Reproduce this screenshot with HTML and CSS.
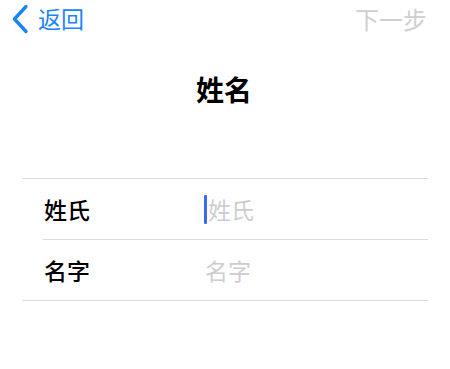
FILE: index.html
```html
<!DOCTYPE html>
<html lang="zh-CN">
<head>
<meta charset="utf-8">
<title>姓名</title>
<link rel="stylesheet" href="styles.css">
</head>
<body>
<div class="nav">
  <div class="back">
    <svg class="chev" width="17" height="30" viewBox="0 0 17 30" aria-hidden="true">
      <polyline points="14,2.5 2.5,15 14,27.5" fill="none" stroke="#1a84fb" stroke-width="3.4" stroke-linecap="round" stroke-linejoin="round"/>
    </svg>
    <span class="back-text">返回</span>
  </div>
  <div class="next">下一步</div>
</div>
<h1 class="title">姓名</h1>
<div class="form">
  <div class="row">
    <div class="label">姓氏</div>
    <div class="field"><span class="caret"></span><span class="ph">姓氏</span></div>
  </div>
  <div class="row">
    <div class="label">名字</div>
    <div class="field"><span class="ph">名字</span></div>
  </div>
</div>
</body>
</html>
```

FILE: styles.css
```css
html, body {
  margin: 0;
  padding: 0;
  background: #ffffff;
}
body {
  font-family: "Noto Sans CJK SC", "Noto Sans", sans-serif;
  width: 450px;
  height: 369px;
  overflow: hidden;
}
.nav {
  height: 37px;
  display: flex;
  align-items: center;
  justify-content: space-between;
  padding: 0 23px 0 12px;
}
.back {
  display: flex;
  align-items: center;
  gap: 9px;
  color: #1a84fb;
  font-size: 23px;
  line-height: 23px;
}
.chev {
  display: block;
  margin-top: 1px;
}
.next {
  color: #cfcfd3;
  font-size: 24px;
  line-height: 24px;
}
.title {
  margin: 38px 0 0;
  text-align: center;
  font-size: 28px;
  line-height: 28px;
  font-weight: 700;
  color: #000;
  padding-right: 2px;
}
.form {
  margin: 75px 22px 0;
  border-top: 1px solid #dcdcdf;
  border-bottom: 1px solid #dcdcdf;
}
.row {
  height: 60px;
  display: flex;
  align-items: center;
  padding-left: 22px;
}
.row + .row {
  border-top: 1px solid #dcdcdf;
  margin-left: 21px;
  padding-left: 1px;
}
.label {
  width: 160px;
  font-size: 23px;
  line-height: 23px;
  font-weight: 500;
  color: #000;
}
.row + .row .label {
  width: 161px;
}
.field {
  display: flex;
  align-items: center;
  font-size: 23px;
  line-height: 23px;
}
.caret {
  display: inline-block;
  width: 3px;
  height: 29px;
  background: #3d6af2;
  border-radius: 1px;
  margin-right: 1px;
}
.ph {
  color: #cdcdd1;
}
```
